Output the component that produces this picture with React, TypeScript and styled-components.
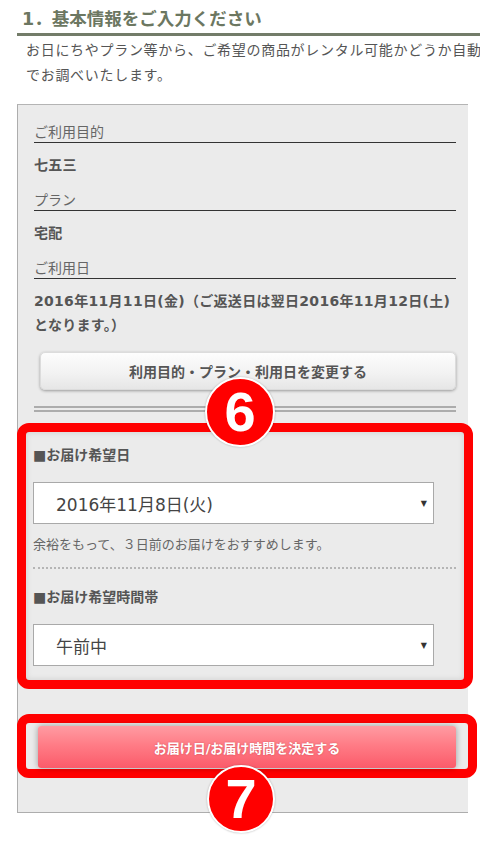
import React from "react"
import styled, { createGlobalStyle } from "styled-components"

const GlobalStyle = createGlobalStyle`
  html, body {
    margin: 0;
    padding: 0;
    background: #fff;
  }
  body {
    width: 480px;
    height: 851px;
    overflow: hidden;
    font-family: "DejaVu Sans", "Noto Sans CJK JP", sans-serif;
    color: #555;
  }
`

const Page = styled.div`
  width: 520px;
  padding: 6px 0 0 17px;
`

const Heading = styled.h2`
  margin: 0;
  padding: 0 0 1px 5px;
  font-size: 17.5px;
  font-weight: 700;
  line-height: 26px;
  color: #6c7761;
  border-bottom: 3px solid #737c69;
`

const Intro = styled.p`
  margin: 2px 0 0 9px;
  width: 458px;
  font-size: 14px;
  letter-spacing: 0.7px;
  line-height: 25px;
  color: #555;
`

const Panel = styled.div`
  box-sizing: border-box;
  width: 451px;
  margin-top: 16px;
  padding: 17px 12px 34px 16px;
  background: #ebebeb;
  border-top: 1px solid #b4b4b4;
  border-left: 1px solid #adadad;
  border-bottom: 1px solid #adadad;
`

const Field = styled.div`
  & + & {
    margin-top: 13px;
  }
`

const FieldLabel = styled.div`
  font-size: 14px;
  line-height: 20px;
  color: #666;
  border-bottom: 1px solid #333;
`

const FieldValue = styled.div`
  margin-top: 10px;
  font-size: 14px;
  font-weight: 700;
  letter-spacing: 0.3px;
  line-height: 24px;
  color: #555;
`

const ChangeButton = styled.button`
  display: block;
  box-sizing: border-box;
  width: 416px;
  height: 38px;
  margin: 15px 0 0 6px;
  border: 1px solid #dcdcdc;
  border-radius: 5px;
  background: linear-gradient(#fdfdfd, #f1f1f1 60%, #e6e6e6);
  box-shadow: 0 1px 3px rgba(0, 0, 0, 0.35);
  font-family: inherit;
  font-size: 14px;
  font-weight: 700;
  color: #555;
`

const DoubleRule = styled.div`
  margin-top: 16px;
  border-top: 6px double #acacac;
`

const Frame = styled.div<{ $top: number; $right: number }>`
  position: relative;
  margin: ${(p) => p.$top}px ${(p) => -p.$right}px 0 -17px;
  border: 9px solid #ff0000;
  border-radius: 12px;
  background: #ebebeb;
`

const Delivery = styled.div`
  padding: 13px 8px 14px 7px;
  box-shadow: inset 0 0 6px rgba(0, 0, 0, 0.12);
`

const SectionLabel = styled.div<{ $gap?: number }>`
  margin-top: ${(p) => p.$gap ?? 0}px;
  font-size: 14px;
  font-weight: 700;
  line-height: 20px;
  color: #555;
`

const SelectBox = styled.div`
  display: flex;
  align-items: center;
  justify-content: space-between;
  box-sizing: border-box;
  width: 401px;
  height: 42px;
  margin-top: 17px;
  padding: 0 6px 0 22px;
  background: #fff;
  border: 1px solid #a9a9a9;
  font-size: 17px;
  color: #444;
`

const Arrow = styled.span`
  font-size: 8px;
  color: #333;
`

const Note = styled.div`
  margin-top: 11px;
  font-size: 13px;
  line-height: 20px;
  color: #666;
`

const DottedRule = styled.div`
  margin-top: 12px;
  border-top: 2px dotted #b5b5b5;
`

const SubmitWrap = styled.div`
  padding: 3px 12px 1px 12px;
`

const SubmitButton = styled.button`
  display: block;
  width: 100%;
  height: 42px;
  border: none;
  border-radius: 3px;
  background: linear-gradient(#ff9ba2, #ff7c86 45%, #fb5b6a);
  box-shadow: 0 0 6px rgba(0, 0, 0, 0.35);
  font-family: inherit;
  font-size: 13px;
  font-weight: 700;
  color: #fff;
  text-shadow: 0 0 2px rgba(120, 0, 0, 0.35);
`

const Badge = styled.div<{ $top: number; $left: number; $size: number }>`
  position: absolute;
  top: ${(p) => p.$top}px;
  left: ${(p) => p.$left}px;
  width: ${(p) => p.$size}px;
  height: ${(p) => p.$size}px;
  box-sizing: border-box;
  display: flex;
  align-items: center;
  justify-content: center;
  border: 2px solid #fff;
  border-radius: 50%;
  background: #ff0000;
  box-shadow: 0 0 2px rgba(0, 0, 0, 0.3);
  font-family: "Liberation Sans", Arial, sans-serif;
  font-size: 56px;
  font-weight: 700;
  line-height: 1;
  color: #fff;
`

const fields = [
  { label: "ご利用目的", value: "七五三" },
  { label: "プラン", value: "宅配" },
  {
    label: "ご利用日",
    value: "2016年11月11日(金)（ご返送日は翌日2016年11月12日(土)となります。）",
  },
]

export default function App() {
  return (
    <>
      <GlobalStyle />
      <Page>
        <Heading>1．基本情報をご入力ください</Heading>
        <Intro>
          お日にちやプラン等から、ご希望の商品がレンタル可能かどうか自動でお調べいたします。
        </Intro>
        <Panel>
          {fields.map((f) => (
            <Field key={f.label}>
              <FieldLabel>{f.label}</FieldLabel>
              <FieldValue>{f.value}</FieldValue>
            </Field>
          ))}
          <ChangeButton>利用目的・プラン・利用日を変更する</ChangeButton>
          <DoubleRule />

          <Frame $top={11} $right={17}>
            <Badge $top={-55} $left={179} $size={70}>6</Badge>
            <Delivery>
              <SectionLabel>■お届け希望日</SectionLabel>
              <SelectBox>
                <span>2016年11月8日(火)</span>
                <Arrow>▼</Arrow>
              </SelectBox>
              <Note>余裕をもって、３日前のお届けをおすすめします。</Note>
              <DottedRule />
              <SectionLabel $gap={18}>■お届け希望時間帯</SectionLabel>
              <SelectBox>
                <span>午前中</span>
                <Arrow>▼</Arrow>
              </SelectBox>
            </Delivery>
          </Frame>

          <Frame $top={25} $right={21}>
            <SubmitWrap>
              <SubmitButton>お届け日/お届け時間を決定する</SubmitButton>
            </SubmitWrap>
            <Badge $top={42} $left={181} $size={68}>7</Badge>
          </Frame>
        </Panel>
      </Page>
    </>
  )
}
